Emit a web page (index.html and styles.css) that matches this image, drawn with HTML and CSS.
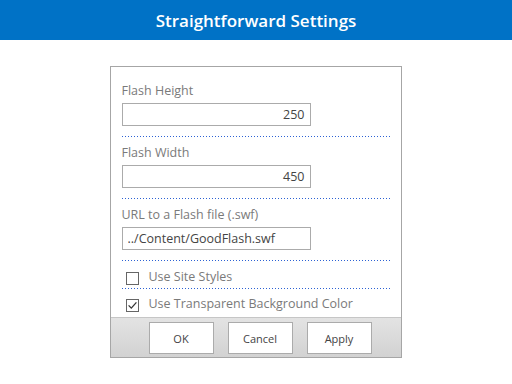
FILE: index.html
```html
<!DOCTYPE html>
<html>
<head>
<meta charset="utf-8">
<link rel="stylesheet" href="styles.css">
</head>
<body>
<header class="topbar">Straightforward Settings</header>
<main class="stage">
  <section class="panel">
    <div class="fields">
      <div class="group">
        <label class="label">Flash Height</label>
        <input class="field num" type="text" value="250">
      </div>
      <div class="group">
        <label class="label">Flash Width</label>
        <input class="field num" type="text" value="450">
      </div>
      <div class="group third">
        <label class="label">URL to a Flash file (.swf)</label>
        <input class="field" type="text" value="../Content/GoodFlash.swf">
      </div>
      <div class="check-row">
        <span class="box"></span>
        <span class="check-label">Use Site Styles</span>
      </div>
      <div class="check-row last">
        <span class="box">
          <svg width="11" height="11" viewBox="0 0 11 11"><path d="M1.6 5.4 L4.3 8.1 L9.4 2.4" fill="none" stroke="#333" stroke-width="1.3"/></svg>
        </span>
        <span class="check-label">Use Transparent Background Color</span>
      </div>
    </div>
    <footer class="actions">
      <button class="btn">OK</button>
      <button class="btn">Cancel</button>
      <button class="btn">Apply</button>
    </footer>
  </section>
</main>
</body>
</html>
```

FILE: styles.css
```css
* { box-sizing: border-box; }
html, body { margin: 0; padding: 0; background: #fff; }
body { font-family: "Open Sans", "Noto Sans", sans-serif; width: 512px; height: 384px; overflow: hidden; }

.topbar {
  height: 40px;
  background: #0072c6;
  color: #fff;
  font-weight: 600;
  font-size: 17px;
  text-align: center;
  line-height: 42px;
}

.stage {
  display: flex;
  justify-content: center;
  padding-top: 26px;
  padding-right: 1px;
}

.panel {
  width: 292px;
  height: 292px;
  border: 1px solid #a6a6a6;
  display: flex;
  flex-direction: column;
}

.fields {
  flex: 1;
  padding: 16px 11px 0 11px;
}

.group {
  padding-bottom: 11px;
  margin-bottom: 8px;
  background-image: linear-gradient(to right, #2d62d4 1px, transparent 1px);
  background-size: 3px 1px;
  background-repeat: repeat-x;
  background-position: left bottom;
}
.group.third { margin-bottom: 0; }

.label {
  display: block;
  font-size: 12.5px;
  color: #7a7a7a;
  line-height: 16px;
  margin: 0 0 4px 0;
}

.field {
  display: block;
  width: 189px;
  height: 23px;
  border: 1px solid #ababab;
  font-family: inherit;
  font-size: 12.5px;
  color: #444;
  padding: 0 5px;
  margin: 0;
  outline: none;
  background: #fff;
}
.field.num { text-align: right; }

.check-row {
  display: flex;
  align-items: flex-end;
  height: 28px;
  padding-left: 4px;
  padding-bottom: 4px;
  background-image: linear-gradient(to right, #2d62d4 1px, transparent 1px);
  background-size: 3px 1px;
  background-repeat: repeat-x;
  background-position: left bottom;
}
.check-row.last { background-image: none; padding-bottom: 5px; }

.box {
  width: 13px;
  height: 13px;
  border: 1px solid #666;
  margin-right: 10px;
  display: flex;
  align-items: center;
  justify-content: center;
  background: #fff;
  flex: none;
}

.check-label {
  font-size: 12.5px;
  color: #7a7a7a;
  line-height: 16px;
}

.actions {
  height: 40px;
  background: linear-gradient(#e3e3e3, #d2d2d2);
  border-top: 1px solid #c6c6c6;
  display: flex;
  justify-content: flex-start;
  align-items: flex-start;
  gap: 14px;
  padding-left: 38px;
  padding-top: 4px;
}

.btn {
  width: 65px;
  height: 32px;
  border: 1px solid #ababab;
  background: #fff;
  font-family: inherit;
  font-size: 11px;
  color: #444;
  padding: 0;
}
```
